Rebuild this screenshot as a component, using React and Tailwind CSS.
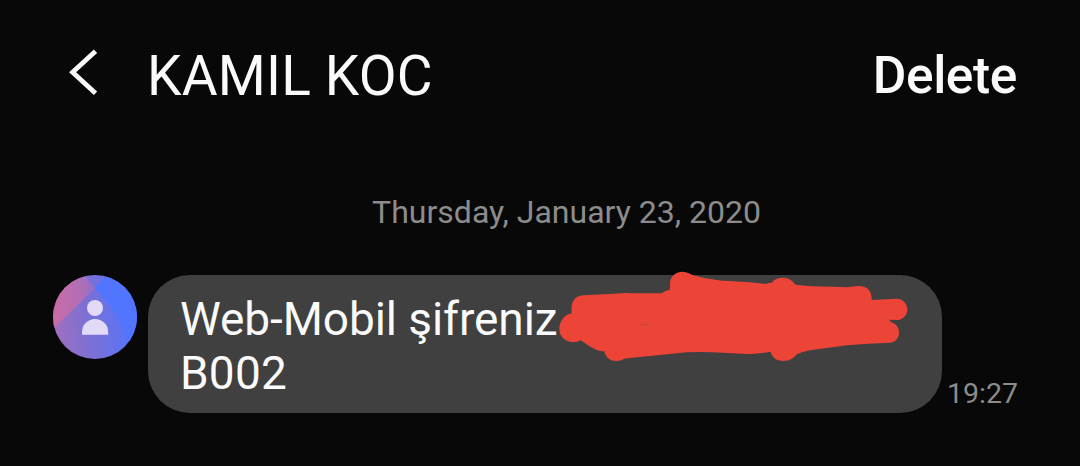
const message = {
    sender: "KAMIL KOC",
    date: "Thursday, January 23, 2020",
    lines: ["Web-Mobil şifreniz", "B002"],
    time: "19:27",
};

function BackIcon() {
    return (
        <svg className="h-[50px] w-[32px]" viewBox="0 0 32 50" fill="none">
            <path d="M28.5 4.2 5.6 25.3l22.900 21" stroke="#fafafa" strokeWidth="4.8" />
        </svg>
    );
}

function Avatar() {
    return (
        <svg className="h-[84px] w-[84px] shrink-0" viewBox="0 0 84 84">
            <defs>
                <linearGradient id="base" x1="0" y1="0.55" x2="1" y2="0.45">
                    <stop offset="0" stopColor="#a06fc0" />
                    <stop offset="0.4" stopColor="#7d70d3" />
                    <stop offset="0.85" stopColor="#5b74f5" />
                    <stop offset="1" stopColor="#5275ff" />
                </linearGradient>
                <linearGradient id="pink" x1="0" y1="0.5" x2="1" y2="0.3">
                    <stop offset="0" stopColor="#c76ca6" />
                    <stop offset="0.6" stopColor="#b66eb3" />
                    <stop offset="1" stopColor="#976fc6" />
                </linearGradient>
                <clipPath id="circle">
                    <circle cx="42" cy="42" r="42" />
                </clipPath>
            </defs>
            <g clipPath="url(#circle)">
                <path d="M0 0h84v84H0z" fill="url(#base)" />
                <path d="M54 0 42 13 58 32 70 52 78 72H90V0z" fill="#5275ff" />
                <path d="M0 0h31l11 13L0 54z" fill="url(#pink)" />
            </g>
            <circle cx="42" cy="33" r="8" fill="#e2daf6" />
            <path d="M29 59.800V57a13 13 0 0 1 26.200 0V59.800z" fill="#e2daf6" />
        </svg>
    );
}

function Scribble() {
    return (
        <svg
            className="absolute top-[-5px] left-[410px] h-[92px] w-[352px]"
            viewBox="558 270 352 92"
            fill="#ec4436"
        >
            <path d="M571.500 313.500V308Q572 296 584 295.300L615 293.800Q623 292.500 632 293.300H661.700Q665 290.500 670 289.700V284C670 276 676 271.700 682.700 271.700C687 271.700 690 274 693.300 275.300Q706 279 720 280.500L750 282.300L766 284Q768 282.700 771.700 282.700C774 279.500 778 277.700 783.300 277.700C789 277.700 793 281 795.500 284.800Q808 286.200 820 286.500T847 287.300L858 286Q871.700 285.500 871.700 300L896.700 298.800A10.650 10.650 0 0 1 896.700 320.100L889.300 319.700Q890 322 892 322.500C897 324.500 899 328 899 332.500C899 338 895.500 342.500 890 342.700Q868 343.500 847 345.300L810 350.300Q802 351.800 796.700 354.300C793 359 789 361 783.300 361C776 361 772 357 770.700 351.700Q758 354 746.700 354L723 352.700Q703 351.500 686.700 352.300L625 358.500Q621 361 616.700 361C609 361 605 356 604.300 351Q600 351.500 596.700 350Q588 346 580.700 340.300Q577 342.200 573 342.200C565 342 559.300 336 559.300 329C559.300 321 565 314 571.500 313.500Z" />
            <path d="M641 325.200l4-.6 4 .2" fill="none" stroke="#9d4b3d" strokeWidth="0.7" />
        </svg>
    );
}

export default function App() {
    return (
        <div className="flex h-[466px] w-[1080px] flex-col overflow-hidden bg-[#080808] font-['Roboto',sans-serif] text-[#fafafa]">
            <header className="flex h-[150px] items-start justify-between pt-[47px] pr-[63px] pl-[67px]">
                <div className="flex items-start">
                    <BackIcon />
                    <h1 className="mt-px ml-[48px] text-[55px] leading-[56px] tracking-[0.2px] whitespace-nowrap">
                        {message.sender}
                    </h1>
                </div>
                <button className="mt-px text-[51.500px] leading-[56px] font-medium tracking-[-0.4px]">Delete</button>
            </header>
            <p className="mt-[42px] pl-[53px] text-center text-[32px] leading-[40px] text-[#8c8c8c]">
                {message.date}
            </p>
            <div className="mt-[43px] flex pl-[53px]">
                <Avatar />
                <div className="relative ml-[11px] h-[138px] w-[794px] shrink-0 rounded-[42px] bg-[#404040] pt-[17px] pl-[32px] text-[46px] leading-[54px]">
                    {message.lines.map((line) => (
                        <p key={line} className="first:tracking-[-0.08px] even:tracking-[0.2px]">
                            {line}
                        </p>
                    ))}
                    <Scribble />
                </div>
                <span className="mb-[2px] ml-[5px] self-end text-[28.500px] leading-[34px] text-[#8c8c8c]">
                    {message.time}
                </span>
            </div>
        </div>
    );
}
